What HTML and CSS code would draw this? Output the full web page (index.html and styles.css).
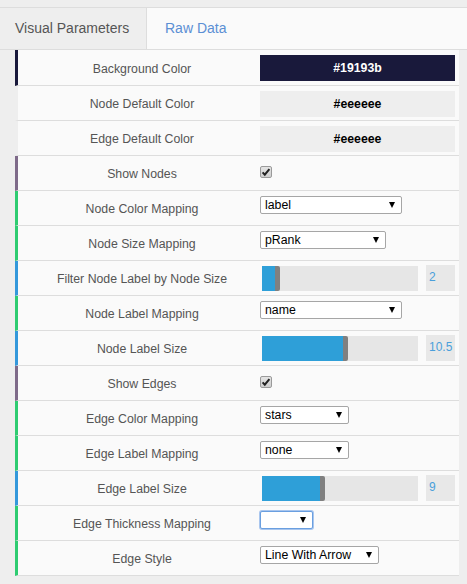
FILE: index.html
```html
<!DOCTYPE html>
<html>
<head>
<meta charset="utf-8">
<title>Visual Parameters</title>
<link rel="stylesheet" href="styles.css">
</head>
<body>
<div class="panel">
  <div class="tabs">
    <div class="tab active">Visual Parameters</div>
    <div class="tab link">Raw Data</div>
  </div>
  <div class="params">
    <div class="row" style="border-left-color:#19193b">
      <div class="label">Background Color</div>
      <div class="ctrl"><div class="swatch dark">#19193b</div></div>
    </div>
    <div class="row" style="border-left-color:#eeeeee">
      <div class="label">Node Default Color</div>
      <div class="ctrl"><div class="swatch light">#eeeeee</div></div>
    </div>
    <div class="row" style="border-left-color:#eeeeee">
      <div class="label">Edge Default Color</div>
      <div class="ctrl"><div class="swatch light">#eeeeee</div></div>
    </div>
    <div class="row toggle">
      <div class="label">Show Nodes</div>
      <div class="ctrl"><span class="check"><svg viewBox="0 0 12 12" width="12" height="12"><path d="M2.6 6.4 L4.8 8.7 L9.4 3.2" fill="none" stroke="#222" stroke-width="2"/></svg></span></div>
    </div>
    <div class="row mapping">
      <div class="label">Node Color Mapping</div>
      <div class="ctrl"><div class="select w141">label</div></div>
    </div>
    <div class="row mapping">
      <div class="label">Node Size Mapping</div>
      <div class="ctrl"><div class="select w125">pRank</div></div>
    </div>
    <div class="row size">
      <div class="label">Filter Node Label by Node Size</div>
      <div class="ctrl">
        <div class="slider"><div class="fill" style="width:13px"></div><div class="handle"></div></div>
        <div class="value">2</div>
      </div>
    </div>
    <div class="row mapping">
      <div class="label">Node Label Mapping</div>
      <div class="ctrl"><div class="select w141">name</div></div>
    </div>
    <div class="row size">
      <div class="label">Node Label Size</div>
      <div class="ctrl">
        <div class="slider"><div class="fill" style="width:81px"></div><div class="handle"></div></div>
        <div class="value">10.5</div>
      </div>
    </div>
    <div class="row toggle">
      <div class="label">Show Edges</div>
      <div class="ctrl"><span class="check"><svg viewBox="0 0 12 12" width="12" height="12"><path d="M2.6 6.4 L4.8 8.7 L9.4 3.2" fill="none" stroke="#222" stroke-width="2"/></svg></span></div>
    </div>
    <div class="row mapping">
      <div class="label">Edge Color Mapping</div>
      <div class="ctrl"><div class="select w88">stars</div></div>
    </div>
    <div class="row mapping">
      <div class="label">Edge Label Mapping</div>
      <div class="ctrl"><div class="select w88">none</div></div>
    </div>
    <div class="row size">
      <div class="label">Edge Label Size</div>
      <div class="ctrl">
        <div class="slider"><div class="fill" style="width:58px"></div><div class="handle"></div></div>
        <div class="value">9</div>
      </div>
    </div>
    <div class="row mapping">
      <div class="label">Edge Thickness Mapping</div>
      <div class="ctrl"><div class="select w52 focused"></div></div>
    </div>
    <div class="row mapping">
      <div class="label">Edge Style</div>
      <div class="ctrl"><div class="select w118">Line With Arrow</div></div>
    </div>
  </div>
</div>
</body>
</html>
```

FILE: styles.css
```css
html, body {
  margin: 0;
  padding: 0;
}
body {
  background: #eeeeee;
  font-family: "Liberation Sans", Arial, sans-serif;
  width: 467px;
  height: 584px;
  overflow: hidden;
}
.panel {
  padding-top: 7px;
}
.tabs {
  display: flex;
  background: #fafafa;
  border-top: 1px solid #dddddd;
  border-bottom: 1px solid #dddddd;
  height: 41px;
}
.tab {
  font-size: 14px;
  line-height: 41px;
  padding: 0 15px;
}
.tab.active {
  width: 116px;
  background: #eeeeee;
  color: #555555;
  border-right: 1px solid #dddddd;
}
.tab.link {
  color: #5b8fd4;
  padding-left: 18px;
}
.params {
  margin-left: 15px;
  width: 444px;
}
.row {
  box-sizing: border-box;
  display: grid;
  grid-template-columns: 234px 1fr;
  height: 35px;
  background: #fafafa;
  border-left: 3px solid #eeeeee;
  border-bottom: 1px solid #dddddd;
}
.row:first-child {
  height: 36px;
}
.row.toggle { border-left-color: #7e6a89; }
.row.mapping { border-left-color: #2ecc71; }
.row.size { border-left-color: #3498db; }
.label {
  display: flex;
  align-items: center;
  justify-content: center;
  padding-left: 14px;
  padding-top: 2px;
  font-size: 12.3px;
  color: #555555;
}
.ctrl {
  display: flex;
  align-items: center;
  padding-left: 8px;
}
.swatch {
  width: 195px;
  height: 26px;
  line-height: 26px;
  text-align: center;
  font-weight: bold;
  font-size: 12.3px;
  margin-top: 1px;
}
.swatch.dark {
  background: #19193b;
  color: #ffffff;
}
.swatch.light {
  background: #eeeeee;
  color: #000000;
}
.check {
  display: block;
  box-sizing: border-box;
  width: 12px;
  height: 12px;
  border: 1px solid #9a9a9a;
  border-radius: 2px;
  background: linear-gradient(#e4e4e4, #cfcfcf);
  margin-bottom: 3px;
  position: relative;
}
.check svg {
  position: absolute;
  left: -1px;
  top: -1px;
}
.select {
  box-sizing: border-box;
  position: relative;
  height: 18px;
  line-height: 16px;
  border: 1px solid #a6a6a6;
  border-radius: 2px;
  background: #ffffff;
  color: #000000;
  font-size: 12.3px;
  padding-left: 4px;
  margin-bottom: 6px;
}
.select::after {
  content: "";
  position: absolute;
  right: 6px;
  top: 5px;
  border-left: 3.5px solid transparent;
  border-right: 3.5px solid transparent;
  border-top: 6px solid #000000;
}
.select.focused {
  border-color: #6a9fe0;
  box-shadow: 0 0 0 1px #a9c6ee;
}
.w141 { width: 142px; }
.w125 { width: 126px; }
.w88 { width: 89px; }
.w52 { width: 53px; }
.w118 { width: 119px; }
.slider {
  display: flex;
  width: 156px;
  height: 25px;
  margin-left: 2px;
  background: #e6e6e6;
}
.fill {
  background: #2e9fd8;
  height: 100%;
}
.handle {
  width: 5px;
  height: 100%;
  background: #808080;
  border-radius: 0 2px 2px 0;
}
.value {
  box-sizing: border-box;
  width: 29px;
  height: 26px;
  margin-left: 8px;
  padding-left: 3px;
  background: #e8e8e8;
  color: #4a9fdb;
  font-size: 12px;
  line-height: 24px;
}
```
